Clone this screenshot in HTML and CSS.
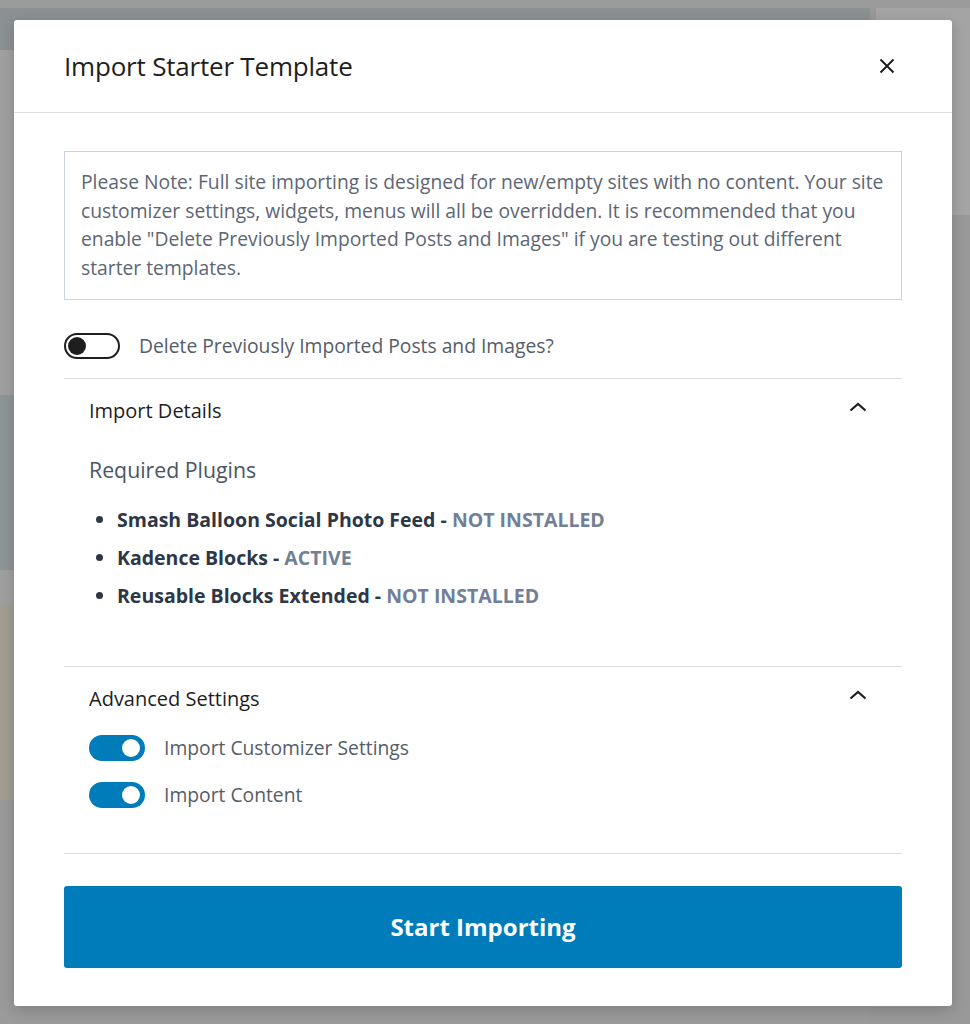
FILE: index.html
```html
<!DOCTYPE html>
<html lang="en">
<head>
<meta charset="utf-8">
<title>Import Starter Template</title>
<link rel="stylesheet" href="styles.css">
</head>
<body>
<div class="page">
  <div class="page-top"></div>
  <div class="page-main">
    <div class="page-col">
      <div class="bg-band"></div>
      <div class="bg-light"></div>
      <div class="bg-img1"></div>
      <div class="bg-gap"></div>
      <div class="bg-img2"></div>
      <div class="bg-rest"></div>
    </div>
    <div class="page-side">
      <div class="side-box"></div>
    </div>
  </div>
</div>

<div class="modal" role="dialog" aria-label="Import Starter Template">
  <div class="modal-header">
    <h1 class="modal-title">Import Starter Template</h1>
    <button class="close-btn" aria-label="Close">
      <svg width="16" height="16" viewBox="0 0 16 16"><path d="M1.5 1.5 L14.5 14.5 M14.5 1.5 L1.5 14.5" stroke="#1e1e1e" stroke-width="2" fill="none"/></svg>
    </button>
  </div>
  <div class="modal-body">
    <div class="notice">Please Note: Full site importing is designed for new/empty sites with no content. Your site customizer settings, widgets, menus will all be overridden. It is recommended that you enable "Delete Previously Imported Posts and Images" if you are testing out different starter templates.</div>

    <div class="toggle-row">
      <span class="toggle off"><span class="knob"></span></span>
      <span class="toggle-label">Delete Previously Imported Posts and Images?</span>
    </div>

    <div class="panel">
      <div class="panel-header">
        <span class="panel-title">Import Details</span>
        <svg class="chev" width="18" height="10" viewBox="0 0 18 10"><path d="M1.5 8.5 L9 2 L16.5 8.5" stroke="#1e1e1e" stroke-width="2.2" fill="none"/></svg>
      </div>
      <div class="panel-content details">
        <h2 class="req-title">Required Plugins</h2>
        <ul class="plugins">
          <li>Smash Balloon Social Photo Feed - <span class="status">NOT INSTALLED</span></li>
          <li>Kadence Blocks - <span class="status">ACTIVE</span></li>
          <li>Reusable Blocks Extended - <span class="status">NOT INSTALLED</span></li>
        </ul>
      </div>
    </div>

    <div class="panel last">
      <div class="panel-header">
        <span class="panel-title">Advanced Settings</span>
        <svg class="chev" width="18" height="10" viewBox="0 0 18 10"><path d="M1.5 8.5 L9 2 L16.5 8.5" stroke="#1e1e1e" stroke-width="2.2" fill="none"/></svg>
      </div>
      <div class="panel-content advanced">
        <div class="toggle-row sub">
          <span class="toggle on"><span class="knob"></span></span>
          <span class="toggle-label">Import Customizer Settings</span>
        </div>
        <div class="toggle-row sub">
          <span class="toggle on"><span class="knob"></span></span>
          <span class="toggle-label">Import Content</span>
        </div>
      </div>
    </div>

    <button class="start-btn">Start Importing</button>
  </div>
</div>
</body>
</html>
```

FILE: styles.css
```css
* { box-sizing: border-box; }
html, body { margin: 0; padding: 0; }
body {
  background: #9c9c9c;
  font-family: "Open Sans", "Noto Sans", sans-serif;
  height: 1024px;
  overflow: hidden;
}

/* dimmed page behind the modal */
.page { height: 1024px; display: flex; flex-direction: column; }
.page-top { height: 8px; background: #9b9b9b; }
.page-main { flex: 1; display: flex; }
.page-col { width: 870px; display: flex; flex-direction: column; }
.page-side { flex: 1; background: #999999; padding-left: 6px; }
.side-box { height: 207px; background: #a4a4a4; }
.bg-band { height: 42px; background: #8b9092; }
.bg-light { height: 345px; background: #a0a0a0; }
.bg-img1 { height: 175px; background: #8e9597; }
.bg-gap { height: 35px; background: #9f9f9f; }
.bg-img2 { height: 195px; background: #a29d91; }
.bg-rest { flex: 1; background: #9a9a9a; }

.modal {
  position: absolute;
  left: 14px;
  top: 20px;
  width: 938px;
  height: 986px;
  background: #fff;
  border-radius: 3px;
  box-shadow: 0 4px 14px rgba(0,0,0,0.18);
  display: flex;
  flex-direction: column;
}

.modal-header {
  height: 93px;
  border-bottom: 1px solid #dddddd;
  display: flex;
  align-items: center;
  justify-content: space-between;
  padding: 0 57px 0 50px;
}
.modal-title {
  margin: 0;
  font-size: 26px;
  font-weight: 500;
  color: #1e1e1e;
  letter-spacing: -0.2px;
}
.close-btn {
  background: none;
  border: 0;
  padding: 0;
  width: 16px;
  height: 16px;
  display: flex;
}

.modal-body {
  padding: 38px 50px 0;
  display: flex;
  flex-direction: column;
}

.notice {
  border: 1px solid #c9d3df;
  padding: 16px;
  font-size: 19.3px;
  line-height: 28.7px;
  color: #5d6675;
}

.toggle-row {
  display: flex;
  align-items: center;
  gap: 19px;
  margin-top: 33px;
  height: 26px;
}
.toggle {
  width: 56px;
  height: 26px;
  border-radius: 13px;
  display: flex;
  align-items: center;
  flex-shrink: 0;
}
.toggle .knob {
  width: 18px;
  height: 18px;
  border-radius: 50%;
}
.toggle.off { border: 2px solid #1e1e1e; padding: 0 2px; }
.toggle.off .knob { background: #1e1e1e; }
.toggle.on { background: #007cba; justify-content: flex-end; padding: 0 5px; }
.toggle.on .knob { background: #fff; }
.toggle-label {
  font-size: 19.3px;
  color: #555d68;
}

.panel {
  border-top: 1px solid #dddddd;
}
.modal-body > .toggle-row + .panel { margin-top: 19px; }
.panel.last { border-bottom: 1px solid #dddddd; }
.panel-header {
  height: 64px;
  display: flex;
  align-items: center;
  justify-content: space-between;
  padding: 0 35px 0 25px;
}
.panel-title {
  font-size: 20px;
  font-weight: 500;
  color: #1e1e1e;
}
.chev { margin-top: -8px; }

.panel-content { padding-left: 25px; }
.details { padding-bottom: 51px; }
.req-title {
  margin: 13px 0 0;
  font-size: 21.3px;
  font-weight: 500;
  line-height: 28px;
  color: #4a5568;
}
.plugins {
  margin: 17px 0 0;
  padding-left: 7px;
  list-style: none;
}
.plugins li {
  font-size: 19.5px;
  line-height: 38px;
  font-weight: 700;
  color: #2d3748;
  display: flex;
  align-items: center;
  gap: 0;
  white-space: pre;
}
.plugins li::before {
  content: "";
  width: 7px;
  height: 7px;
  border-radius: 50%;
  background: #2d3748;
  margin-right: 14px;
  flex-shrink: 0;
}
.plugins .status { color: #718096; }

.advanced { padding-top: 4px; padding-bottom: 45px; display: flex; flex-direction: column; gap: 21px; }
.toggle-row.sub { margin-top: 0; }

.start-btn {
  margin-top: 32px;
  height: 82px;
  width: 100%;
  border: 0;
  border-radius: 3px;
  background: #007cba;
  color: #fff;
  font-family: inherit;
  font-size: 24px;
  font-weight: 700;
}
```
